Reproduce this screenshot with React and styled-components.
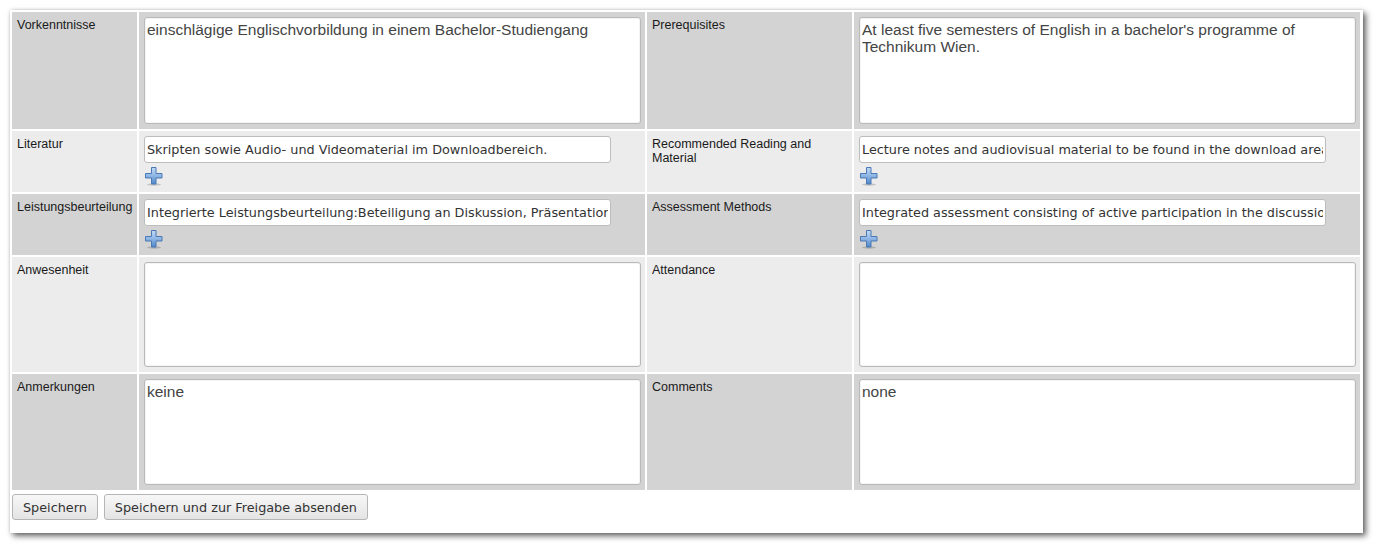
import React from "react";
import styled, { createGlobalStyle } from "styled-components";

const GlobalStyle = createGlobalStyle`
  html, body {
    margin: 0;
    padding: 0;
    background: #ffffff;
  }
  body {
    font-family: "Liberation Sans", Arial, sans-serif;
  }
`;

const Page = styled.div`
  padding: 10px 17px 16px 10px;
`;

const Window = styled.div`
  width: 1353px;
  background: #ffffff;
  box-shadow: 3px 3px 6px rgba(0, 0, 0, 0.6), 0 0 3px rgba(0, 0, 0, 0.15);
  padding: 2px 0 13px 2px;
  box-sizing: border-box;
`;

const Grid = styled.div`
  display: grid;
  grid-template-columns: 125px 506px 205px 506px;
  gap: 2px;
`;

const Cell = styled.div`
  background: ${(p) => (p.$shade ? "#d3d3d3" : "#ececec")};
  box-sizing: border-box;
`;

const LabelCell = styled(Cell)`
  padding: 6px 5px;
  font-size: 12.5px;
  line-height: 14px;
  color: #1a1a1a;
`;

const FieldCell = styled(Cell)`
  padding: 5px 4px ${(p) => (p.$area ? 5 : 6)}px 5px;
  display: flex;
  flex-direction: column;
  align-items: flex-start;
`;

const Area = styled.textarea`
  width: 100%;
  height: ${(p) => p.$h}px;
  box-sizing: border-box;
  border: 1px solid #b9b9b9;
  border-radius: 3px;
  padding: 3px 2px;
  font-family: "Liberation Sans", Arial, sans-serif;
  font-size: 15.5px;
  line-height: 17px;
  color: #444;
  resize: none;
  background: #fff;
  outline: none;
  box-shadow: inset 0 0 0 1px #f4f4f4;
`;

const Field = styled.input`
  width: 467px;
  height: 27px;
  box-sizing: border-box;
  border: 1px solid #bdbdbd;
  border-radius: 3px;
  padding: 0 2px;
  font-family: "DejaVu Sans", sans-serif;
  font-size: 12.8px;
  color: #333;
  background: #fff;
  outline: none;
`;

const AddButton = styled.span`
  display: block;
  width: 20px;
  height: 20px;
  margin-top: 3px;
  cursor: pointer;
`;

const Buttons = styled.div`
  display: flex;
  gap: 6px;
  margin-top: 4px;
`;

const Button = styled.button`
  height: 26px;
  padding: 0 10px;
  border: 1px solid #b5b5b5;
  border-radius: 3px;
  background: linear-gradient(#f7f7f7, #e4e4e4);
  font-family: "DejaVu Sans", sans-serif;
  font-size: 12.8px;
  color: #333;
  cursor: pointer;
`;

const Plus = () => (
  <AddButton>
    <svg width="20" height="20" viewBox="0 0 20 20">
      <defs>
        <linearGradient id="pg" x1="0" y1="0" x2="0" y2="1">
          <stop offset="0" stopColor="#c2daf4" />
          <stop offset="0.5" stopColor="#8fb6e4" />
          <stop offset="1" stopColor="#4f86c8" />
        </linearGradient>
      </defs>
      <ellipse cx="10" cy="18.5" rx="7" ry="1.2" fill="rgba(0,0,0,0.18)" />
      <path
        d="M7.5 1.5 h4.5 v6 h6 v4.5 h-6 v6 h-4.5 v-6 h-6 v-4.5 h6 z"
        fill="url(#pg)"
        stroke="#4a79b5"
        strokeWidth="1"
      />
    </svg>
  </AddButton>
);

const rows = [
  {
    de: "Vorkenntnisse",
    en: "Prerequisites",
    deVal: "einschlägige Englischvorbildung in einem Bachelor-Studiengang",
    enVal: "At least five semesters of English in a bachelor's programme of Technikum Wien.",
    area: true,
    h: 107,
  },
  {
    de: "Literatur",
    en: "Recommended Reading and Material",
    deVal: "Skripten sowie Audio- und Videomaterial im Downloadbereich.",
    enVal: "Lecture notes and audiovisual material to be found in the download area.",
  },
  {
    de: "Leistungsbeurteilung",
    en: "Assessment Methods",
    deVal: "Integrierte Leistungsbeurteilung:Beteiligung an Diskussion, Präsentation",
    enVal: "Integrated assessment consisting of active participation in the discussion",
  },
  { de: "Anwesenheit", en: "Attendance", deVal: "", enVal: "", area: true, h: 105 },
  { de: "Anmerkungen", en: "Comments", deVal: "keine", enVal: "none", area: true, h: 106 },
];

const Entry = ({ row, value }) =>
  row.area ? (
    <Area $h={row.h} defaultValue={value} />
  ) : (
    <>
      <Field defaultValue={value} />
      <Plus />
    </>
  );

export default function App() {
  return (
    <>
      <GlobalStyle />
      <Page>
        <Window>
          <Grid>
            {rows.map((r, i) => {
              const shade = i % 2 === 0;
              return (
                <React.Fragment key={r.de}>
                  <LabelCell $shade={shade}>{r.de}</LabelCell>
                  <FieldCell $shade={shade} $area={r.area}>
                    <Entry row={r} value={r.deVal} />
                  </FieldCell>
                  <LabelCell $shade={shade}>{r.en}</LabelCell>
                  <FieldCell $shade={shade} $area={r.area}>
                    <Entry row={r} value={r.enVal} />
                  </FieldCell>
                </React.Fragment>
              );
            })}
          </Grid>
          <Buttons>
            <Button>Speichern</Button>
            <Button>Speichern und zur Freigabe absenden</Button>
          </Buttons>
        </Window>
      </Page>
    </>
  );
}
